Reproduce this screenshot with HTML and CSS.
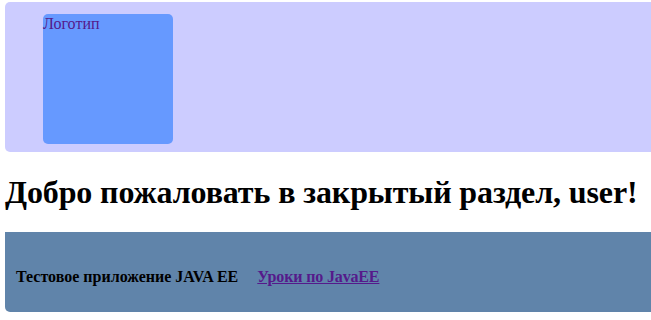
FILE: index.html
```html
<!DOCTYPE html>
<html lang="ru">
<head>
<meta charset="utf-8">
<title>Закрытый раздел</title>
<link rel="stylesheet" href="styles.css">
</head>
<body>
<header class="header">
  <div class="logo">Логотип</div>
</header>
<h1 class="title">Добро пожаловать в закрытый раздел, user!</h1>
<footer class="footer">
  <span class="footer-text">Тестовое приложение JAVA EE</span>
  <a class="footer-link" href="#">Уроки по JavaEE</a>
</footer>
</body>
</html>
```

FILE: styles.css
```css
html, body {
  margin: 0;
  padding: 0;
}
body {
  padding: 2px 0 0 5px;
  font-family: "Liberation Serif", "Times New Roman", serif;
  font-size: 16px;
  background: #ffffff;
  color: #000000;
}
.header {
  height: 150px;
  background: #ccccff;
  border-radius: 5px 0 0 5px;
  padding: 12px 0 0 38px;
  box-sizing: border-box;
}
.logo {
  width: 130px;
  height: 130px;
  background: #6699ff;
  border-radius: 5px;
  color: #551a8b;
  font-size: 16px;
  line-height: 20px;
}
.title {
  margin: 22px 0 0 0;
  font-size: 32px;
  line-height: 37px;
  font-weight: bold;
  letter-spacing: -0.12px;
}
.footer {
  margin-top: 21px;
  height: 80px;
  box-sizing: border-box;
  background: #6084aa;
  border-radius: 0 0 0 5px;
  display: flex;
  align-items: flex-start;
  padding: 36px 0 0 11px;
  font-size: 16px;
  line-height: 18px;
  font-weight: bold;
  gap: 19px;
}
.footer-link {
  color: #551a8b;
  letter-spacing: -0.15px;
}
```
